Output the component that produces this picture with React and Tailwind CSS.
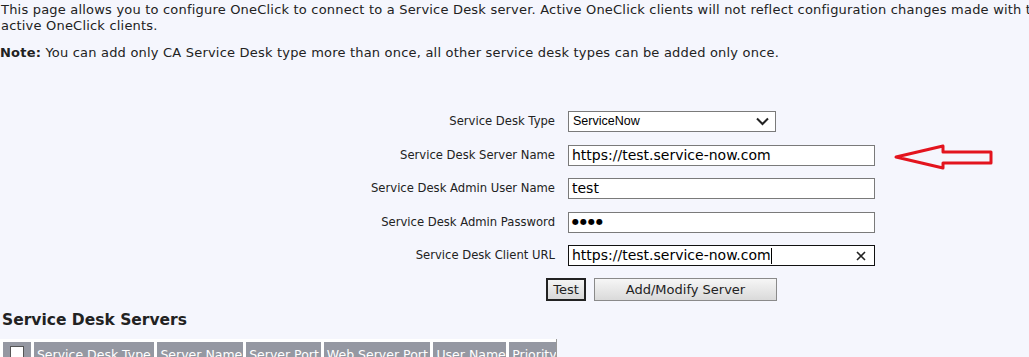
import React from "react";

const labelCls = "w-[200px] text-right text-[11.6px] text-[#222] pr-[13px]";
const inputCls =
  "w-[307px] h-[21px] bg-white border border-[#7a7a7a] px-[3px] text-[14px] text-black flex items-center font-['DejaVu_Sans',sans-serif]";

const FormRow = ({ label, children }) => (
  <div className="h-[33.5px] flex items-center">
    <div className={labelCls}>{label}</div>
    {children}
  </div>
);

const headers = [
  ["Service Desk Type", "w-[121px]"],
  ["Server Name", "w-[86px]"],
  ["Server Port", "w-[75px]"],
  ["Web Server Port", "w-[107px]"],
  ["User Name", "w-[73px]"],
  ["Priority", "w-[47px]"],
];

const App = () => {
  return (
    <div className="w-[1029px] h-[357px] overflow-hidden bg-[#f5f6fd] font-['DejaVu_Sans',sans-serif] text-[#222] pt-[2px]">
      <div className="w-[1060px]">
        {/* Intro text */}
        <p className="text-[13px] tracking-[0.2px] leading-[16px] pl-[1px]">
          This page allows you to configure OneClick to connect to a Service Desk server. Active OneClick clients will not
          reflect configuration changes made with the
          <br />
          active OneClick clients.
        </p>
        <p className="text-[13px] tracking-[0.2px] leading-[16px] mt-[11px]">
          <b>Note:</b> You can add only CA Service Desk type more than once, all other service desk types can be added only
          once.
        </p>

        {/* Form */}
        <div className="mt-[44px] ml-[368px]">
          <FormRow label="Service Desk Type">
            <div className="w-[208px] h-[21px] bg-white border border-[#7a7a7a] pl-[4px] pr-[6px] flex items-center justify-between text-[12.5px] text-black font-['Liberation_Sans',sans-serif]">
              <span>ServiceNow</span>
              <svg width="13" height="9" viewBox="0 0 13 9">
                <path d="M1 1.5 L6.5 7 L12 1.5" fill="none" stroke="#222" strokeWidth="2" />
              </svg>
            </div>
          </FormRow>
          <FormRow label="Service Desk Server Name">
            <div className={inputCls}>https://test.service-now.com</div>
            {/* red annotation arrow */}
            <svg width="105" height="30" viewBox="0 0 105 30" className="ml-[16px] mt-[4px]">
              <path
                d="M5 15 L52 4 L52 10 L100 10 L100 21 L52 21 L52 26 Z"
                fill="none"
                stroke="#e3141e"
                strokeWidth="3"
                strokeLinejoin="round"
              />
            </svg>
          </FormRow>
          <FormRow label="Service Desk Admin User Name">
            <div className={inputCls}>test</div>
          </FormRow>
          <FormRow label="Service Desk Admin Password">
            <div className={inputCls}>
              <span className="text-[8px] tracking-[1px]">●●●●</span>
            </div>
          </FormRow>
          <FormRow label="Service Desk Client URL">
            <div className={inputCls + " !border-[#111] justify-between pr-[8px]"}>
              <span>
                https://test.service-now.com<span className="inline-block w-px h-[16px] bg-black align-middle"></span>
              </span>
              <svg width="10" height="10" viewBox="0 0 10 10">
                <path d="M1 1 L9 9 M9 1 L1 9" stroke="#222" strokeWidth="1.6" />
              </svg>
            </div>
          </FormRow>
          <div className="h-[33.5px] flex items-center ml-[178px] gap-[8px]">
            <button className="w-[40px] h-[23px] border-2 border-[#222] bg-gradient-to-b from-[#f4f4f4] to-[#d8d8d8] text-[13px] text-[#222]">
              Test
            </button>
            <button className="w-[183px] h-[23px] border border-[#8a8a8a] bg-gradient-to-b from-[#f6f6f6] to-[#dadada] text-[13px] text-[#222]">
              Add/Modify Server
            </button>
          </div>
        </div>

        {/* Servers table */}
        <h2 className="mt-[3px] pl-[2px] text-[15.5px] font-bold leading-[22px] text-[#222]">Service Desk Servers</h2>
        <div className="mt-[8px] w-[557px] bg-white border-r border-[#9a9a9a] pt-[3px] pl-[3px] flex gap-[3px]">
          <div className="w-[28px] h-[22px] bg-[#9598a2] flex justify-center pt-[4px]">
            <div className="w-[14px] h-[14px] bg-white border border-[#555]"></div>
          </div>
          {headers.map(([h, w]) => (
            <div key={h} className={`${w} h-[22px] bg-[#9598a2] text-white text-[12.5px] px-[3px] pt-[4px] whitespace-nowrap overflow-hidden`}>
              {h}
            </div>
          ))}
        </div>
      </div>
    </div>
  );
};

export default App;
